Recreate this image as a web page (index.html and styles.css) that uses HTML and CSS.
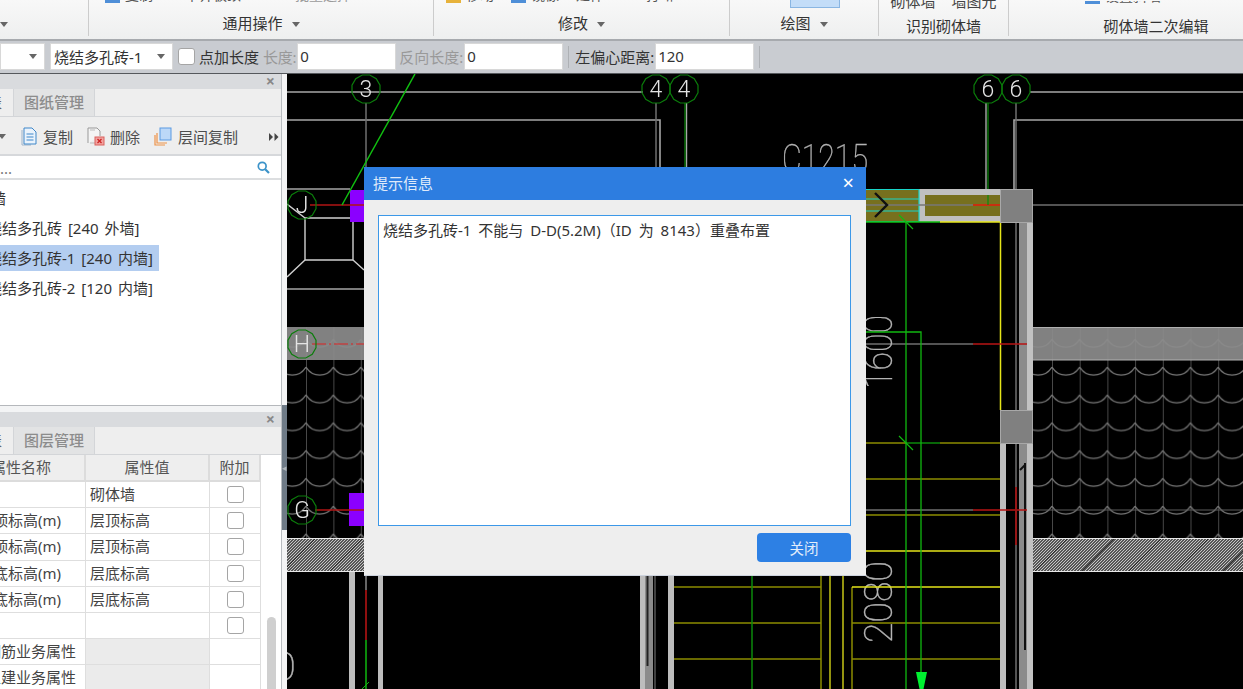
FILE: index.html
```html
<!DOCTYPE html>
<html lang="zh-CN">
<head>
<meta charset="utf-8">
<title>提示信息</title>
<link rel="stylesheet" href="styles.css">
</head>
<body>
<div class="app">
  <header class="ribbon">
    <section class="group g-a">
      <div class="group-label label-left"><i class="caret"></i></div>
    </section>
    <section class="group g-b">
      <div class="clip-row">
        <span class="clip-item w-50"><i class="clip-icon"></i>复制</span>
        <span class="clip-item w-80">平齐板顶</span>
        <span class="clip-item w-75 dim">批量选择</span>
      </div>
      <div class="group-label">通用操作<i class="caret"></i></div>
    </section>
    <section class="group g-c">
      <div class="clip-row">
        <span class="clip-item w-45"><i class="clip-icon amber"></i>移动</span>
        <span class="clip-item w-45"><i class="clip-icon"></i>镜像</span>
        <span class="clip-item w-50">延伸</span>
        <span class="clip-item w-50">打断</span>
      </div>
      <div class="group-label">修改<i class="caret"></i></div>
    </section>
    <section class="group g-d">
      <div class="draw-tile"></div>
      <div class="group-label">绘图<i class="caret"></i></div>
    </section>
    <section class="group g-e">
      <div class="clip-row tall">砌体墙<span class="sp"></span>墙图元</div>
      <div class="group-label low">识别砌体墙</div>
    </section>
    <section class="group g-f">
      <div class="clip-row"><span class="clip-item w-100"><i class="clip-icon"></i>设置斜墙</span></div>
      <div class="group-label low shifted">砌体墙二次编辑</div>
    </section>
  </header>

  <div class="optbar">
    <div class="select s-first"><i class="caret"></i></div>
    <div class="select s-second"><span>烧结多孔砖-1</span><i class="caret"></i></div>
    <span class="check"></span>
    <span class="opt-label">点加长度</span>
    <span class="opt-label dim tight">长度:</span>
    <div class="num">0</div>
    <span class="opt-label dim near">反向长度:</span>
    <div class="num">0</div>
    <i class="sep"></i>
    <span class="opt-label">左偏心距离:</span>
    <div class="num">120</div>
    <i class="sep"></i>
  </div>

  <div class="main">
    <aside class="side">
      <div class="panel p-top">
        <div class="panel-title"><span class="x">×</span></div>
        <div class="tabs">
          <div class="tab cut"><span>构件列表</span></div>
          <div class="tab off">图纸管理</div>
        </div>
        <div class="tools">
          <i class="caret tool-caret"></i>
          <svg class="ic ic-copy" viewBox="0 0 17 19"><path d="M1 3V18H10" fill="none" stroke="#9db4cc"/><path d="M3 1H11L15 5V17H3Z" fill="#eaf3fc" stroke="#3f87c9"/><path d="M5.500 7H12.500M5.500 10H12.500M5.500 13H12.500" stroke="#3f87c9"/></svg>
          <span class="tool-text">复制</span>
          <svg class="ic ic-del" viewBox="0 0 18 19"><path d="M1 16V1H10L13 4V9" fill="#f4f4f4" stroke="#999"/><path d="M3 3H8M3 16H8" stroke="#bbb"/><rect x="8" y="10" width="9" height="8" fill="#f2a3a0" stroke="#d9605c"/><path d="M10.500 12L14.500 16M14.500 12L10.500 16" stroke="#c22" stroke-width="1.300"/></svg>
          <span class="tool-text">删除</span>
          <svg class="ic ic-floor" viewBox="0 0 18 19"><path d="M1 8V18H11M3 6V16H13" fill="none" stroke="#ee9349" stroke-width="1.200"/><rect x="6" y="1" width="11" height="12" fill="#bcd8f8" stroke="#5a9ae2"/></svg>
          <span class="tool-text">层间复制</span>
          <svg class="more" viewBox="0 0 10 8"><path d="M0 0L4 4L0 8ZM5.500 0L9.500 4L5.500 8Z" fill="#444"/></svg>
        </div>
        <div class="search">
          <span class="search-hint">...</span>
          <svg class="ic-search" viewBox="0 0 13 13"><circle cx="5.200" cy="5.200" r="3.900" fill="none" stroke="#3c93c9" stroke-width="1.700"/><path d="M8.200 8.200L12 12" stroke="#3c93c9" stroke-width="2.200"/></svg>
        </div>
        <ul class="tree">
          <li class="tree-row root"><span>砌体墙</span></li>
          <li class="tree-row"><span>烧结多孔砖 [240 外墙]</span></li>
          <li class="tree-row active"><span>烧结多孔砖-1 [240 内墙]</span></li>
          <li class="tree-row"><span>烧结多孔砖-2 [120 内墙]</span></li>
        </ul>
      </div>
      <div class="panel p-bottom">
        <div class="panel-title"><span class="x">×</span></div>
        <div class="tabs">
          <div class="tab cut"><span>属性列表</span></div>
          <div class="tab off">图层管理</div>
        </div>
        <div class="props">
          <div class="prop-grid">
            <div class="cell head">属性名称</div><div class="cell head">属性值</div><div class="cell head">附加</div>
            <div class="cell"></div><div class="cell val">砌体墙</div><div class="cell box"><span class="check"></span></div>
            <div class="cell name">起点顶标高(m)</div><div class="cell val">层顶标高</div><div class="cell box"><span class="check"></span></div>
            <div class="cell name">终点顶标高(m)</div><div class="cell val">层顶标高</div><div class="cell box"><span class="check"></span></div>
            <div class="cell name">起点底标高(m)</div><div class="cell val">层底标高</div><div class="cell box"><span class="check"></span></div>
            <div class="cell name">终点底标高(m)</div><div class="cell val">层底标高</div><div class="cell box"><span class="check"></span></div>
            <div class="cell"></div><div class="cell"></div><div class="cell box"><span class="check"></span></div>
            <div class="cell sub">+ 钢筋业务属性</div><div class="cell shade"></div><div class="cell"></div>
            <div class="cell sub">+ 土建业务属性</div><div class="cell shade"></div><div class="cell"></div>
          </div>
          <div class="vscroll"><div class="thumb"></div></div>
        </div>
      </div>
    </aside>
    <div class="splitter"><div class="grip"><span>◂</span></div></div>
    <div class="canvas">
      <svg class="cad" viewBox="287 74 956 615" preserveAspectRatio="none">
        <defs>
          <polygon id="axis" points="14,3.750 10.250,10.250 3.750,14 -3.750,14 -10.250,10.250 -14,3.750 -14,-3.750 -10.250,-10.250 -3.750,-14 3.750,-14 10.250,-10.250 14,-3.750" fill="none" stroke="#0b7d0b" stroke-width="1.200"/>
          <pattern id="scales" patternUnits="userSpaceOnUse" x="1052" y="366" width="27.700" height="27.800">
            <path d="M0 0V27.800" stroke="#777" stroke-width="1.200" fill="none"/>
            <path d="M0 1C3 6 8 9 13.850 9S24.700 6 27.700 1" stroke="#777" stroke-width="1.200" fill="none"/>
          </pattern>
          <pattern id="scalesL" patternUnits="userSpaceOnUse" x="306" y="366" width="27.400" height="27.800">
            <path d="M0 0V27.800" stroke="#777" stroke-width="1.200" fill="none"/>
            <path d="M0 1C3 6 8 9 13.700 9S24.400 6 27.400 1" stroke="#777" stroke-width="1.200" fill="none"/>
          </pattern>
          <pattern id="hatch" patternUnits="userSpaceOnUse" width="3" height="3">
            <rect width="3" height="3" fill="#565656"/>
            <path d="M-1 4L4 -1M-1 1L1 -1M2 4L4 2" stroke="#d2d2d2" stroke-width=".9"/>
          </pattern>
          <pattern id="streak" patternUnits="userSpaceOnUse" width="47" height="34" y="538">
            <path d="M0 34L34 0" stroke="#222" stroke-width=".9"/>
          </pattern>
        </defs>
        <rect x="287" y="74" width="956" height="615" fill="#000"/>

        <!-- roof tiles -->
        <rect x="287" y="327" width="77" height="211" fill="url(#scalesL)"/>
        <rect x="1033" y="327" width="210" height="211" fill="url(#scales)"/>
        <rect x="287" y="327" width="77" height="33" fill="#8c8c8c" opacity=".92"/>
        <rect x="1033" y="327" width="210" height="33" fill="#8c8c8c" opacity=".92"/>
        <path d="M1033 327.500H1243M1033 360H1243" stroke="#b0b0b0"/>

        <!-- hatching -->
        <rect x="287" y="538" width="77" height="34" fill="url(#hatch)"/>
        <rect x="1033" y="538" width="210" height="34" fill="url(#hatch)"/>
        <rect x="287" y="538" width="77" height="34" fill="url(#streak)"/>
        <rect x="1033" y="538" width="210" height="34" fill="url(#streak)"/>
        <path d="M287 538.500H364M287 571.500H364M1033 538.500H1243M1033 571.500H1243" stroke="#e8e8e8"/>

        <!-- plan lines -->
        <g fill="none" stroke="#a6a6a6" stroke-width="1.600">
          <path d="M287 92H643M1030 92H1243"/>
          <path d="M287 120H660V170M1243 120H1014V189"/>
          <path d="M287 189H350"/>
          <path d="M287 289H364"/>
        </g>
        <g fill="none" stroke="#6f6f6f" stroke-width="1.500">
          <path d="M366 103V190M656 103V167M1016 103V189"/>
          <path d="M1033 205H1243"/>
          <path d="M866 344H973M866 510H973"/>
          <path d="M1028 510H1243" stroke-width="1" stroke="#5c5c5c"/>
          <path d="M1016 222V689"/>
          <path d="M655 576V689" stroke="#555"/>
        </g>
        <path d="M686.500 103V167M986 103V189" stroke="#a8a8a8" stroke-width="1.400" fill="none"/>
        <path d="M685 103V167M988 103V189" stroke="#0b8a0b" stroke-width="1.200" fill="none"/>

        <!-- column J square -->
        <g fill="none" stroke="#d0d0d0" stroke-width="1.400">
          <path d="M305 218H353V260H305Z"/>
          <path d="M287 204L305 218M305 260L287 277M353 260L364 270"/>
        </g>

        <!-- purple columns -->
        <rect x="350" y="190" width="14" height="32" fill="#8b00ff"/>
        <rect x="349" y="493" width="15" height="33" fill="#8b00ff"/>

        <!-- red axis -->
        <path d="M310 205H364" stroke="#b01414" stroke-width="1.500"/>
        <path d="M312 344H364" stroke="#d22" stroke-width="1.200" stroke-dasharray="14 3 2 3"/>
        <path d="M315 510H364" stroke="#b01414" stroke-width="1.500"/>

        <!-- green diagonal -->
        <path d="M342 205L415 74" stroke="#10c010" stroke-width="1.500"/>

        <!-- axis bubbles -->
        <g class="bubble-text">
          <use href="#axis" x="366" y="89"/><text x="366" y="97">3</text>
          <use href="#axis" x="656" y="89"/><text x="656" y="97">4</text>
          <use href="#axis" x="684" y="89"/><text x="684" y="97">4</text>
          <use href="#axis" x="988" y="89"/><text x="988" y="97">6</text>
          <use href="#axis" x="1016" y="89"/><text x="1016" y="97">6</text>
          <use href="#axis" x="302" y="205"/><text x="302" y="213">J</text>
          <use href="#axis" x="302" y="344"/><text x="302" y="352">H</text>
          <use href="#axis" x="302" y="510"/><text x="302" y="518">G</text>
        </g>

        <!-- CAD dimension text -->
        <g class="cad-text">
          <text x="782" y="172" textLength="86" lengthAdjust="spacingAndGlyphs">C1215</text>
          <text transform="translate(892 389) rotate(-90)" textLength="74" lengthAdjust="spacingAndGlyphs">1600</text>
          <text transform="translate(892 643) rotate(-90)" textLength="82" lengthAdjust="spacingAndGlyphs">2080</text>
          <text x="272" y="680" textLength="24" lengthAdjust="spacingAndGlyphs">0</text>
        </g>

        <!-- top beam -->
        <rect x="866" y="189" width="53" height="33" fill="#77701e"/>
        <rect x="919" y="189" width="81" height="33" fill="#c0c0c0"/>
        <rect x="925" y="195" width="75" height="21" fill="#77701e"/>
        <path d="M866 189.500H919V221.500H866M866 199H919M866 211H919" stroke="#19d4c8" stroke-width="1.200" fill="none"/>
        <path d="M866 205H1000" stroke="#777" stroke-width="1.500"/>
        <path d="M973 205H1000" stroke="#c8300f" stroke-width="2"/>
        <path d="M988 195V205" stroke="#0b8a0b" stroke-width="1.200"/>
        <path d="M875 193L887 205L875 217" fill="none" stroke="#111" stroke-width="2.400"/>
        <path d="M866 222H940" stroke="#10c010" stroke-width="1.400"/>
        <path d="M940 222H1000.500V410" stroke="#e6e619" stroke-width="1.500" fill="none"/>

        <!-- right wall -->
        <rect x="1000" y="443" width="6" height="246" fill="#bdbdbd"/>
        <rect x="1019" y="222" width="8" height="467" fill="#8b8b8b"/>
        <rect x="1027" y="222" width="6" height="467" fill="#c2c2c2"/>
        <path d="M1025 463V650" stroke="#111" stroke-width="2"/>
        <path d="M1020 470L1025 465" stroke="#111" stroke-width="2"/>
        <rect x="1000.500" y="189.500" width="32" height="33" fill="#808080" stroke="#a8a8a8"/>
        <rect x="1000.500" y="410.500" width="32" height="33" fill="#808080" stroke="#a8a8a8"/>
        <path d="M973 344H1027M973 510H1027" stroke="#b81414" stroke-width="1.500"/>
        <path d="M1016 487V545" stroke="#a01010" stroke-width="1.800"/>

        <!-- stairs -->
        <g stroke="#8c8c00" stroke-width="1.500" fill="none">
          <path d="M866 443H906M940 443H1000M866 479H1000M866 515H1000M852 623H1000M852 659H1000"/>
          <path d="M674 587H821M674 623H821M674 659H821"/>
          <path d="M821 576V689M852 587V689"/>
        </g>
        <g stroke="#e3e31a" stroke-width="1.300" fill="none">
          <path d="M866 551H1000M852 587H1000"/>
          <path d="M830 576V689M843 576V689"/>
        </g>
        <path d="M906 443H940" stroke="#0b8a0b" stroke-width="1.500"/>

        <!-- green route -->
        <path d="M906 222V689M866 332H921V675" fill="none" stroke="#10b810" stroke-width="1.300"/>
        <path d="M752 576V689" stroke="#0b8a0b" stroke-width="1.500"/>
        <path d="M899 215L913 229M899 436L913 450" stroke="#10b810" stroke-width="1.200"/>
        <path d="M916 672H927L923.500 689H919.500Z" fill="#00f030"/>

        <!-- lower walls -->
        <rect x="349" y="572" width="6" height="117" fill="#bdbdbd"/>
        <rect x="378" y="576" width="5" height="113" fill="#bdbdbd"/>
        <rect x="640" y="576" width="5" height="113" fill="#bdbdbd"/>
        <rect x="645" y="576" width="8" height="113" fill="#8b8b8b"/>
        <path d="M647.500 576V666" stroke="#222" stroke-width="2"/>
        <rect x="668" y="576" width="6" height="113" fill="#bdbdbd"/>
        <path d="M366 576V590" stroke="#666" stroke-width="2"/>
        <path d="M366 590V640" stroke="#8f0f0f" stroke-width="2"/>
        <path d="M366 640V689" stroke="#0b8a0b" stroke-width="2"/>
        <path d="M362 689L369 682" stroke="#10b810"/>
      </svg>
    </div>
  </div>

  <div class="dialog">
    <div class="dlg-title"><span>提示信息</span><span class="dlg-x">×</span></div>
    <div class="dlg-body">
      <div class="dlg-msg">烧结多孔砖-1 不能与 D-D(5.2M)（ID 为 8143）重叠布置</div>
      <div class="dlg-foot"><button class="dlg-btn" type="button">关闭</button></div>
    </div>
  </div>
</div>
</body>
</html>
```

FILE: styles.css
```css
* { box-sizing: border-box; }
html, body { margin: 0; padding: 0; }
body {
  width: 1243px;
  height: 689px;
  overflow: hidden;
  font-family: "Noto Sans", "Noto Sans CJK SC", sans-serif;
  font-size: 15px;
  color: #333;
}
ul { list-style: none; margin: 0; padding: 0; }
i { font-style: normal; }

.app {
  position: relative;
  width: 1243px;
  height: 689px;
  display: flex;
  flex-direction: column;
  filter: blur(.35px);
}

.caret {
  display: inline-block;
  width: 0;
  height: 0;
  border-left: 4.500px solid transparent;
  border-right: 4.500px solid transparent;
  border-top: 5px solid #666;
  margin-left: 9px;
  vertical-align: middle;
}

/* ribbon */
.ribbon {
  height: 41px;
  flex: none;
  display: flex;
  background: linear-gradient(#f8f8f8, #eeefef);
  border-bottom: 2px solid #a7aaae;
}
.group {
  height: 36px;
  display: flex;
  flex-direction: column;
  justify-content: flex-end;
  align-items: center;
  overflow: hidden;
  border-right: 1px solid #ccc;
}
.g-a { width: 89px; }
.g-b { width: 345px; }
.g-c { width: 296px; }
.g-d { width: 149px; }
.g-e { width: 130px; }
.g-f { flex: 1; border-right: 0; }
.group-label {
  height: 20px;
  line-height: 20px;
  margin-bottom: 3px;
  white-space: nowrap;
  flex: none;
}
.group-label.low { margin-bottom: 0; }
.group-label.shifted { margin-left: 60px; }
.label-left { align-self: flex-start; margin-left: -9px; }
.clip-row {
  display: flex;
  align-items: flex-end;
  width: 100%;
  height: 3px;
  flex: none;
  margin-bottom: 10px;
  overflow: hidden;
  font-size: 14px;
  line-height: 16px;
  color: #555;
}
.g-b .clip-row { padding-left: 16px; gap: 30px; }
.g-c .clip-row { padding-left: 12px; gap: 20px; }
.g-e .clip-row {
  justify-content: center;
  height: 9px;
  margin-bottom: 7px;
  font-size: 15px;
  color: #444;
}
.g-f .clip-row { padding-left: 76px; margin-bottom: 12px; }
.sp { width: 16px; }
.clip-item { display: flex; align-items: flex-end; gap: 5px; white-space: nowrap; flex: none; }
.w-45 { width: 45px; }
.w-50 { width: 50px; }
.w-75 { width: 75px; }
.w-80 { width: 80px; }
.w-100 { width: 100px; }
.dim { color: #9b9b9b; }
.clip-icon { width: 15px; height: 16px; background: #4f8fd8; flex: none; }
.clip-icon.amber { background: #e7b23b; }
.draw-tile {
  width: 50px;
  height: 8px;
  flex: none;
  margin: 0 0 5px 0;
  background: #c3ddf8;
  border: 1px solid #8ab6e2;
  border-top: 0;
}
.g-d .draw-tile { align-self: flex-start; margin-left: 60px; }

/* option bar */
.optbar {
  height: 33px;
  flex: none;
  display: flex;
  align-items: center;
  padding-bottom: 1px;
  background: #c9ccd1;
  border-bottom: 1px solid #55585c;
}
.select {
  height: 27px;
  display: flex;
  align-items: center;
  justify-content: space-between;
  background: #fff;
  border: 1px solid #d8d8d8;
  padding-right: 7px;
}
.s-first { width: 45px; justify-content: flex-end; margin-right: 5px; }
.s-second { width: 123px; padding-left: 3px; margin-right: 5px; }
.check {
  display: inline-block;
  width: 17px;
  height: 17px;
  background: #fff;
  border: 1px solid #a5a5a5;
  border-radius: 3px;
  flex: none;
}
.opt-label { white-space: nowrap; margin-left: 4px; }
.opt-label.tight { letter-spacing: -.3px; }
.opt-label.near { margin-left: 3px; }
.opt-label.dim { color: #999; }
.num {
  width: 99px;
  height: 27px;
  line-height: 25px;
  padding-left: 2px;
  margin-left: 1px;
  background: #fff;
  border: 1px solid #d8d8d8;
  flex: none;
}
.sep {
  width: 1px;
  height: 22px;
  background: #aeb1b5;
  margin: 0 2px 0 5px;
  flex: none;
}

/* main */
.main { flex: 1; min-height: 0; display: flex; }
.side {
  width: 282px;
  flex: none;
  display: flex;
  flex-direction: column;
  background: #f3f4f5;
  border-right: 1px solid #b9bcc0;
}
.panel { background: #fff; display: flex; flex-direction: column; overflow: hidden; }
.p-top { height: 332px; flex: none; border-bottom: 1px solid #b5b8bc; margin-bottom: 6px; }
.p-bottom { flex: 1; min-height: 0; }
.panel-title {
  height: 15px;
  flex: none;
  background: #d9dbde;
  display: flex;
  justify-content: flex-end;
  align-items: center;
  padding-right: 6px;
}
.x { color: #888; font-size: 16px; line-height: 15px; font-weight: 700; }
.tabs {
  height: 28px;
  flex: none;
  display: flex;
  background: #eee;
  border-bottom: 1px solid #d3d5d8;
}
.tab { height: 27px; line-height: 26px; flex: none; white-space: nowrap; }
.tab.cut {
  width: 14px;
  display: flex;
  justify-content: flex-end;
  padding-right: 11px;
  overflow: hidden;
  background: #eee;
  border-right: 1px solid #d3d5d8;
}
.tab.cut span { flex: none; color: #666; }
.tab.off {
  width: 81px;
  text-align: center;
  background: #e2e3e4;
  color: #8c8c8c;
  border-right: 1px solid #d3d5d8;
  font-weight: 500;
}
.tools {
  height: 39px;
  flex: none;
  display: flex;
  align-items: center;
  padding-top: 2px;
  background: #eee;
  border-bottom: 2px solid #d6d8db;
}
.tool-caret { margin-left: -2px; margin-right: 15px; }
.ic { flex: none; }
.ic-copy { width: 17px; height: 19px; margin-right: 5px; }
.ic-del { width: 18px; height: 19px; margin: 0 5px 0 14px; }
.ic-floor { width: 18px; height: 19px; margin: 0 6px 0 14px; }
.tool-text { white-space: nowrap; color: #4d4d4d; }
.more { width: 10px; height: 8px; margin-left: 31px; flex: none; }
.search {
  height: 24px;
  flex: none;
  display: flex;
  align-items: center;
  justify-content: space-between;
  padding-right: 11px;
  background: #fff;
  border-bottom: 2px solid #dcdee0;
}
.search-hint { line-height: 24px; margin-top: 2px; color: #777; }
.ic-search { width: 13px; height: 13px; }
.tree { padding-top: 3px; flex: 1; }
.tree-row { height: 30px; display: flex; align-items: center; margin-left: -13px; word-spacing: 2px; }
.tree-row span { height: 26px; line-height: 26px; padding-right: 6px; white-space: nowrap; }
.tree-row.root { margin-left: -39px; }
.tree-row.active span { background: #b3cdf0; }

.props { flex: 1; min-height: 0; display: flex; overflow: hidden; background: #fff; }
.prop-grid {
  width: 261px;
  flex: none;
  display: grid;
  grid-template-columns: 86px 124px 51px;
  grid-template-rows: 27px;
  grid-auto-rows: 26.200px;
  align-content: start;
  overflow: hidden;
}
.cell {
  border-right: 1px solid #dedede;
  border-bottom: 1px solid #dedede;
  line-height: 25px;
  white-space: nowrap;
  color: #444;
  display: flex;
  align-items: center;
  min-width: 0;
}
.cell.head {
  justify-content: center;
  background: #eee;
  color: #555;
  border-bottom: 2px solid #dcdcdc;
  border-right: 2px solid #dcdcdc;
}
.cell.head:first-child { justify-content: flex-end; padding-right: 33px; }
.cell.val { padding-left: 4px; }
.cell.name { justify-content: flex-end; padding-right: 24px; }
.cell.sub { justify-content: flex-end; padding-right: 9px; }
.cell.shade { background: #ebebeb; }
.cell.box { justify-content: center; }
.vscroll { width: 20px; flex: none; padding: 162px 0 0 6px; }
.thumb { width: 9px; height: 120px; background: #cfcfcf; border-radius: 5px; }

.splitter { width: 5px; flex: none; background: #f4f4f5; display: flex; flex-direction: column; }
.grip {
  width: 5px;
  height: 125px;
  margin-top: 331px;
  background: #6f7b87;
  color: #b0b6bc;
  font-size: 9px;
  display: flex;
  align-items: center;
  justify-content: center;
  overflow: hidden;
}
.canvas { flex: 1; min-width: 0; background: #000; overflow: hidden; }
.cad { display: block; width: 100%; height: 100%; }
.bubble-text text {
  font-family: Roboto, "Liberation Sans", sans-serif;
  font-weight: 300;
  font-size: 23px;
  fill: #e4e4e4;
  text-anchor: middle;
}
.cad-text text {
  font-family: Roboto, "Liberation Sans", sans-serif;
  font-weight: 100;
  font-size: 38px;
  fill: #b5b5b5;
  stroke: #b5b5b5;
  stroke-width: .4px;
}

/* dialog */
.dialog {
  position: absolute;
  left: 364px;
  top: 167px;
  width: 502px;
  height: 409px;
  background: #eee;
  border-bottom: 1px solid #cdd3de;
  display: flex;
  flex-direction: column;
}
.dlg-title {
  height: 33px;
  flex: none;
  display: flex;
  align-items: center;
  justify-content: space-between;
  padding: 0 12px 2px 9px;
  background: #2d7de0;
  color: #dfeafa;
}
.dlg-x { color: #fff; font-size: 20px; line-height: 28px; }
.dlg-body { flex: 1; display: flex; flex-direction: column; padding: 15px 15px 0 14px; }
.dlg-msg {
  height: 311px;
  flex: none;
  padding: 3px 4px;
  line-height: 22px;
  background: #fff;
  border: 1.500px solid #3c98e8;
  color: #333;
  word-spacing: 3px;
  white-space: nowrap;
}
.dlg-foot { display: flex; justify-content: flex-end; padding-top: 7px; }
.dlg-btn {
  width: 94px;
  height: 29px;
  padding: 0;
  border: 0;
  border-radius: 4px;
  background: #2d80e4;
  color: #e3eefb;
  font: inherit;
  font-size: 14.500px;
}
```
